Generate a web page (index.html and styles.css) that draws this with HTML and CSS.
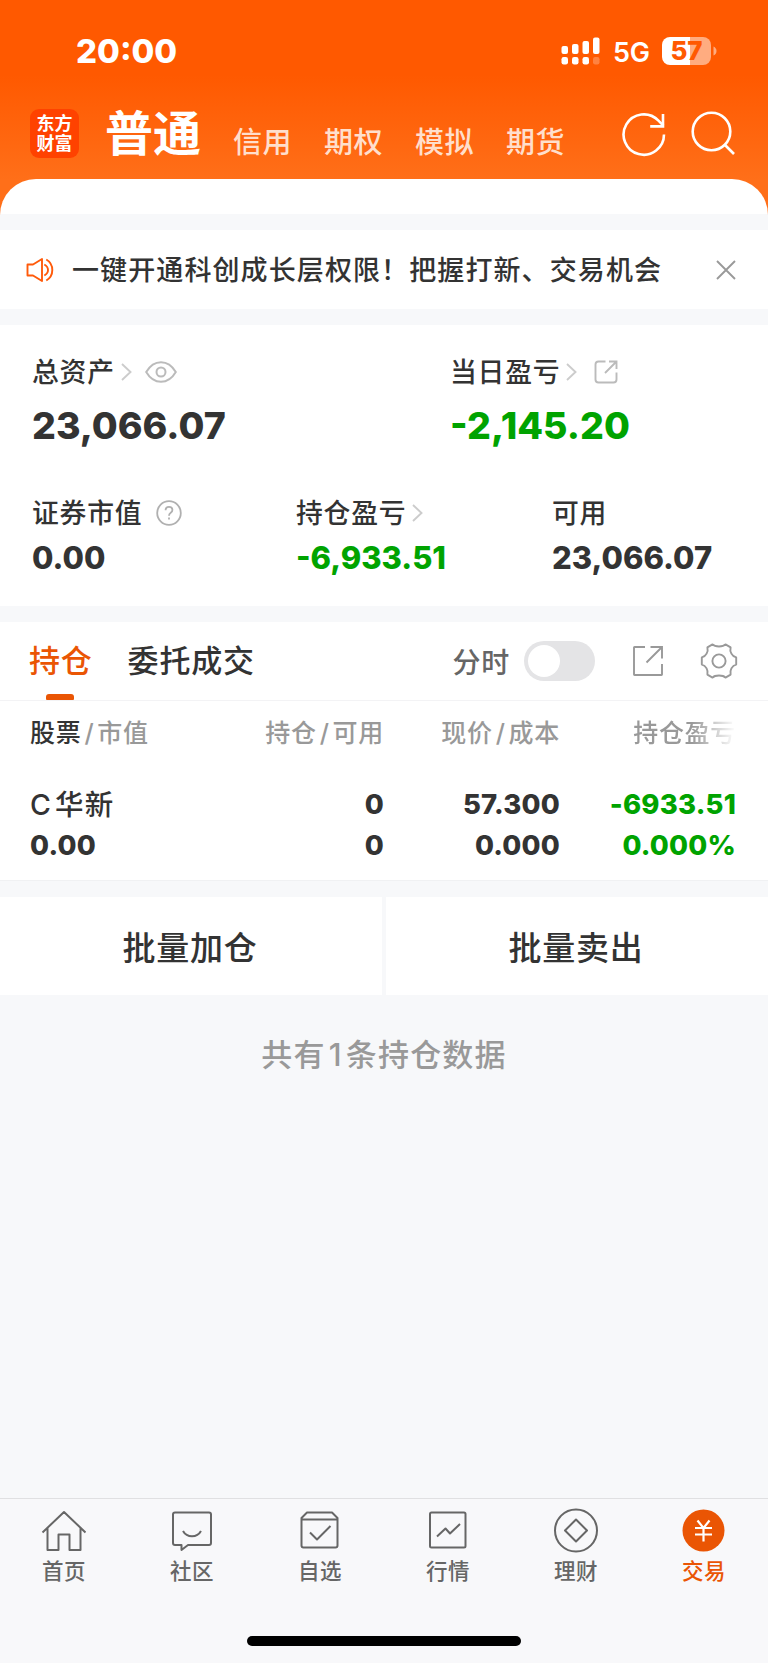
FILE: index.html
```html
<!DOCTYPE html>
<html lang="zh-CN">
<head>
    <meta charset="UTF-8">
    <meta name="viewport" content="width=device-width, initial-scale=1.0">
    <title>交易</title>
    <link rel="stylesheet" href="styles.css">
</head>
<body>
    <div class="app">
        <header class="header">
            <!-- Status bar -->
            <div class="status-bar">
                <span class="time">20:00</span>
                <svg class="signal" width="40" height="28" viewBox="0 0 40 28" fill="#fff">
                    <rect x="0.5" y="9" width="6.5" height="8" rx="2"/>
                    <rect x="11" y="7" width="6.5" height="10" rx="2"/>
                    <rect x="21.5" y="4" width="6.5" height="13" rx="2"/>
                    <rect x="32" y="0.5" width="6.5" height="16.5" rx="2"/>
                    <rect x="0.5" y="20" width="6.5" height="7.5" rx="2.2"/>
                    <rect x="11" y="20" width="6.5" height="7.5" rx="2.2"/>
                    <rect x="21.5" y="20" width="6.5" height="7.5" rx="2.2"/>
                    <rect x="32" y="20" width="6.5" height="7.5" rx="2.2" opacity="0.25"/>
                </svg>
                <span class="network">5G</span>
                <div class="battery"><span>57</span></div>
                <svg class="battery-tip" width="4" height="10" viewBox="0 0 4 10"><path d="M0.5 0.5Q3.5 2 3.5 5T0.5 9.5Z" fill="#ffac80"/></svg>
            </div>

            <!-- Account type tabs -->
            <nav class="account-nav">
                <div class="logo"><span>东方</span><span>财富</span></div>
                <a class="account active">普通</a>
                <a class="account">信用</a>
                <a class="account">期权</a>
                <a class="account">模拟</a>
                <a class="account">期货</a>
                <svg class="refresh" width="44" height="46" viewBox="0 0 44 46" fill="none" stroke="#fff" stroke-width="2.6">
                    <path d="M42 23.5A20.2 20.2 0 1 1 36.2 9.4L41.4 14.6"/>
                    <path d="M41 3V15.4H28.2"/>
                </svg>
                <svg class="search" width="44" height="46" viewBox="0 0 44 46" fill="none" stroke="#fff" stroke-width="2.6">
                    <circle cx="20.5" cy="20.5" r="18.8"/>
                    <path d="M33.5 33.5L43 43"/>
                </svg>
            </nav>
            <div class="sheet-top"></div>
        </header>

        <!-- Notice -->
        <div class="notice">
            <svg width="28" height="26" viewBox="0 0 28 26" fill="none" stroke="#ff5a0a" stroke-width="1.9" stroke-linejoin="round">
                <path d="M1.5 7.5H7L16 2V24L7 18.5H1.5Z"/>
                <path d="M18.3 7.5Q22 9.5 22 13T18.3 18.5M20.3 2.5Q26.3 6 26.3 13T20.3 23.5"/>
            </svg>
            <p>一键开通科创成长层权限！把握打新、交易机会</p>
            <svg class="close" width="20" height="20" viewBox="0 0 20 20" stroke="#999" stroke-width="1.9"><path d="M1 1L19 19M19 1L1 19"/></svg>
        </div>

        <!-- Assets -->
        <section class="assets">
            <div class="assets-main">
                <div class="asset">
                    <div class="label">总资产
                        <svg class="chevron" width="11" height="18" viewBox="0 0 11 18"><path d="M1 1L9.5 9L1 17"/></svg>
                        <svg class="eye" width="32" height="22" viewBox="0 0 32 22" fill="none" stroke="#bbb" stroke-width="2">
                            <path d="M1.2 11Q7 1.2 16 1.2T30.8 11Q25 20.8 16 20.8T1.2 11Z"/>
                            <circle cx="16" cy="11" r="4.5"/>
                        </svg>
                    </div>
                    <div class="value">23,066.07</div>
                </div>
                <div class="asset">
                    <div class="label">当日盈亏
                        <svg class="chevron" width="11" height="18" viewBox="0 0 11 18"><path d="M1 1L9.5 9L1 17"/></svg>
                        <svg class="share" width="24" height="24" viewBox="0 0 24 24" fill="none" stroke="#bbb" stroke-width="1.9">
                            <path d="M11.5 1.5H4.5Q1.5 1.5 1.5 4.5V19.5Q1.5 22.5 4.5 22.5H19.5Q22.5 22.5 22.5 19.5V12.5M15 1.5H22.5V9M22.5 1.5L11 13"/>
                        </svg>
                    </div>
                    <div class="value down">-2,145.20</div>
                </div>
            </div>
            <div class="assets-sub">
                <div class="asset">
                    <div class="label">证券市值
                        <svg class="help" width="26" height="26" viewBox="0 0 26 26" fill="none" stroke="#b0b0b0" stroke-width="1.8">
                            <circle cx="13" cy="13" r="11.8"/>
                            <path d="M9.6 10.2Q9.6 6.8 13 6.8T16.4 10Q16.4 11.6 14.7 12.8Q13 14 13 15.8M13 17.6V19.6"/>
                        </svg>
                    </div>
                    <div class="value">0.00</div>
                </div>
                <div class="asset">
                    <div class="label">持仓盈亏
                        <svg class="chevron" width="11" height="18" viewBox="0 0 11 18"><path d="M1 1L9.5 9L1 17"/></svg>
                    </div>
                    <div class="value down">-6,933.51</div>
                </div>
                <div class="asset">
                    <div class="label">可用</div>
                    <div class="value">23,066.07</div>
                </div>
            </div>
        </section>

        <!-- Positions -->
        <section class="positions">
            <div class="tabs">
                <a class="tab active">持仓</a>
                <a class="tab">委托成交</a>
                <span class="toggle-label">分时</span>
                <span class="toggle"></span>
                <svg class="export" width="32" height="32" viewBox="0 0 32 32" fill="none" stroke="#999" stroke-width="1.9">
                    <path d="M13 2H2.5Q2 2 2 2.5V29.5Q2 30 2.5 30H29.5Q30 30 30 29.5V19M18.5 2H30V13.5M30 2L14.5 17.5"/>
                </svg>
                <svg class="gear" width="38" height="38" viewBox="0 0 38 38" fill="none" stroke="#999" stroke-width="1.9" stroke-linejoin="round">
                    <path d="M12.5 2.4C15 5.2 23 5.2 25.5 2.4L30.6 5.4C29.5 9.5 32 14.5 36.2 15.4V22.6C32 23.5 29.5 28.5 30.6 32.6L25.5 35.6C23 32.8 15 32.8 12.5 35.6L7.4 32.6C8.5 28.5 6 23.5 1.8 22.6V15.4C6 14.5 8.5 9.5 7.4 5.4Z"/>
                    <circle cx="19" cy="19" r="6.6"/>
                </svg>
            </div>
            <div class="table">
                <div class="row head">
                    <span><b>股票</b><i>/</i>市值</span>
                    <span>持仓<i>/</i>可用</span>
                    <span>现价<i>/</i>成本</span>
                    <span class="fade">持仓盈亏</span>
                </div>
                <div class="row">
                    <span class="name">C<em>华新</em></span>
                    <span>0</span>
                    <span>57.300</span>
                    <span class="down">-6933.51</span>
                </div>
                <div class="row">
                    <span>0.00</span>
                    <span>0</span>
                    <span>0.000</span>
                    <span class="down">0.000%</span>
                </div>
            </div>
        </section>

        <div class="batch">
            <button>批量加仓</button>
            <button>批量卖出</button>
        </div>

        <p class="summary">共有<span>1</span>条持仓数据</p>

        <!-- Bottom tab bar -->
        <footer class="tab-bar">
            <nav>
                <a>
                    <svg width="46" height="46" viewBox="0 0 46 46">
                        <path d="M1.5 24.5L23 4L44.5 24.5M6.5 20V42H17.5V26.5H28.5V42H39.5V20"/>
                    </svg>
                    首页
                </a>
                <a>
                    <svg width="46" height="46" viewBox="0 0 46 46">
                        <path d="M6 4.5H40Q42 4.5 42 6.5V35Q42 37 40 37H19L12.5 42V37H6Q4 37 4 35V6.5Q4 4.5 6 4.5Z"/>
                        <path d="M14 23Q17 28.3 23 28.3T32 23"/>
                    </svg>
                    社区
                </a>
                <a>
                    <svg width="46" height="46" viewBox="0 0 46 46">
                        <path d="M4.5 11.5V37.5Q4.5 39.5 6.5 39.5H38.5Q40.5 39.5 40.5 37.5V11.5ZM4.5 11.5V10L10 4.5H35L40.5 10V11.5"/>
                        <path d="M13 24.5L20 31.5L33.5 18"/>
                    </svg>
                    自选
                </a>
                <a>
                    <svg width="46" height="46" viewBox="0 0 46 46">
                        <rect x="5" y="4.5" width="35.5" height="35" rx="1.5"/>
                        <path d="M12 28.5L20.5 20.5L25 25.5L35 16"/>
                    </svg>
                    行情
                </a>
                <a>
                    <svg width="46" height="46" viewBox="0 0 46 46">
                        <circle cx="23" cy="22.5" r="21"/>
                        <path d="M23 11.5L34 22.5L23 33.5L12 22.5Z"/>
                    </svg>
                    理财
                </a>
                <a class="active">
                    <svg width="46" height="46" viewBox="0 0 46 46">
                        <circle cx="22.5" cy="22.5" r="21" fill="#ea5504" stroke="none"/>
                        <path d="M16.5 12.5L22.5 20L28.5 12.5M22.5 20V33.5M14 20H31M14 26.5H31" stroke="#fff" stroke-width="2.2"/>
                    </svg>
                    交易
                </a>
            </nav>
            <div class="home-indicator"></div>
        </footer>
    </div>
</body>
</html>
```
FILE: styles.css
```css
* {
    margin: 0;
    padding: 0;
    box-sizing: border-box;
}

body {
    font-family: Inter, "Noto Sans CJK SC", sans-serif;
    font-weight: 500;
    color: #333;
    background: #f7f8fa;
}

svg {
    display: block;
    flex: none;
}

.app {
    width: 768px;
    height: 1663px;
    display: flex;
    flex-direction: column;
    overflow: hidden;
}

/* Header */
.header {
    height: 230px;
    background: linear-gradient(#ff5900 0, #ff5900 75px, #ff6f19 180px, #ff6f19 222px, #f7f8fa 222px);
    color: #fff;
}

.status-bar {
    height: 84px;
    padding: 18px 51px 0 76px;
    display: flex;
    align-items: center;
}

.time {
    flex: 1;
    font-size: 33px;
    font-weight: 800;
}

.network {
    margin-left: 12px;
    width: 49px;
    padding-top: 2px;
    font-size: 27px;
    font-weight: 600;
    letter-spacing: -0.3px;
}

.battery {
    width: 49px;
    height: 28px;
    border-radius: 8px;
    background: linear-gradient(90deg, #fff 57%, #ffac80 57%);
    color: #ff5900;
    font-size: 26px;
    font-weight: 800;
    line-height: 28px;
    text-align: center;
}

.battery-tip {
    margin-left: 2px;
}

.account-nav {
    height: 95px;
    padding: 1px 33px 0 30px;
    display: flex;
    align-items: center;
}

.logo {
    width: 49px;
    height: 49px;
    margin: 3px 26px 0 0;
    border-radius: 9px;
    background: #ff4200;
    display: flex;
    flex-direction: column;
    justify-content: center;
    font-size: 18px;
    font-weight: 700;
    line-height: 20px;
    text-align: center;
}

.account {
    margin-right: 32px;
    padding-top: 21px;
    color: #ffdfcc;
    font-size: 29px;
    letter-spacing: 0.5px;
    line-height: 40px;
}

.account.active {
    margin-right: 32px;
    padding-top: 3px;
    color: #fff;
    font-size: 48px;
    font-weight: 700;
    letter-spacing: 0;
    line-height: 60px;
}

.refresh {
    margin: 3px 25px 0 auto;
}

.search {
    margin-top: 3px;
}

.sheet-top {
    height: 51px;
    border-radius: 36px 36px 0 0;
    background: linear-gradient(#fff 35px, #f7f8fa 35px);
}

/* Notice */
.notice {
    height: 79px;
    padding: 0 32px 0 26px;
    display: flex;
    align-items: center;
    background: #fff;
    font-size: 27px;
    letter-spacing: 1.1px;
}

.notice p {
    margin-left: 18px;
    padding-bottom: 2px;
}

.notice .close {
    margin-left: auto;
}

/* Assets */
.assets {
    height: 281px;
    margin-top: 16px;
    padding: 26px 0 0 32px;
    background: #fff;
}

.assets-main {
    display: grid;
    grid-template-columns: 418px 1fr;
}

.assets-sub {
    display: grid;
    grid-template-columns: 264px 256px 1fr;
    margin-top: 45px;
}

.label {
    height: 40px;
    padding-bottom: 2px;
    display: flex;
    align-items: center;
    font-size: 26.8px;
    letter-spacing: 0.8px;
}

.label svg {
    margin-top: 3px;
}

.chevron {
    margin-left: 6px;
    fill: none;
    stroke: #ccc;
    stroke-width: 1.9;
}

.eye {
    margin-left: 13px;
}

.share {
    margin-left: 17px;
}

.help {
    margin-left: 14px;
}

.value {
    font-size: 31px;
    font-weight: 800;
    line-height: 40px;
    padding-top: 6px;
}

.assets-main .value {
    height: 56px;
    padding-top: 13px;
    font-size: 37.5px;
    line-height: 44px;
}

.down {
    color: #00a300;
}

/* Positions */
.positions {
    height: 259px;
    margin-top: 16px;
    background: #fff;
    border-bottom: 1px solid #f0f1f3;
}

.tabs {
    height: 79px;
    padding: 0 30px 0 29px;
    display: flex;
    align-items: center;
    border-bottom: 1px solid #f3f3f5;
    font-size: 31px;
    letter-spacing: 0.8px;
}

.tab {
    position: relative;
    margin-right: 35px;
    line-height: 78px;
}

.tab.active {
    color: #ea5504;
}

.tab.active::after {
    content: "";
    position: absolute;
    left: 17px;
    bottom: 0;
    width: 28px;
    height: 6px;
    border-radius: 3px 3px 1px 1px;
    background: #ea5504;
}

.toggle-label {
    margin-left: auto;
    color: #666;
    font-size: 28px;
}

.toggle {
    width: 71px;
    height: 40px;
    margin: 0 37px 0 14px;
    padding: 4px;
    border-radius: 20px;
    background: #e4e4e6;
}

.toggle::before {
    content: "";
    display: block;
    width: 32px;
    height: 32px;
    border-radius: 50%;
    background: #fff;
}

.gear {
    margin-left: 36px;
}

.row {
    height: 42px;
    padding: 0 33px 0 30px;
    display: grid;
    grid-template-columns: 177px 177px 176px 176px;
    align-items: center;
    font-size: 27.5px;
    font-weight: 800;
    letter-spacing: 0.2px;
    text-align: right;
    white-space: nowrap;
}

.row span:first-child {
    text-align: left;
}

.row .name {
    padding-bottom: 3px;
    font-size: 28.5px;
    font-weight: 500;
}

.row em {
    margin-left: 4px;
    font-style: normal;
    letter-spacing: 1.2px;
}

.row.head {
    height: 60px;
    margin-bottom: 21px;
    color: #999;
    font-size: 25px;
    font-weight: 500;
    letter-spacing: 0.7px;
}

.row b {
    color: #333;
    font-weight: 500;
}

.row i {
    margin: 0 3px;
    font-style: normal;
}

.fade {
    -webkit-mask-image: linear-gradient(90deg, #000 75%, transparent);
    mask-image: linear-gradient(90deg, #000 75%, transparent);
}

/* Batch actions */
.batch {
    height: 98px;
    margin-top: 16px;
    display: grid;
    grid-template-columns: 1fr 1fr;
    gap: 4px;
}

.batch button {
    padding-right: 2px;
    border: none;
    background: #fff;
    color: #333;
    font: inherit;
    font-size: 33px;
    letter-spacing: 0.8px;
}

.summary {
    margin-top: 38px;
    color: #999;
    font-size: 31px;
    letter-spacing: 1.2px;
    line-height: 44px;
    text-align: center;
}

.summary span {
    margin: 0 3px;
}

/* Bottom tab bar */
.tab-bar {
    height: 165px;
    margin-top: auto;
    border-top: 1px solid #e0e0e2;
    background: #f8f8fa;
}

.tab-bar nav {
    height: 137px;
    padding-top: 9px;
    display: grid;
    grid-template-columns: repeat(6, 1fr);
}

.tab-bar a {
    display: flex;
    flex-direction: column;
    align-items: center;
    color: #666;
    font-size: 21.5px;
    letter-spacing: 0.6px;
    line-height: 34px;
}

.tab-bar a.active {
    color: #ea5504;
}

.tab-bar svg {
    fill: none;
    stroke: #666;
    stroke-width: 2;
    stroke-linejoin: round;
}

.home-indicator {
    width: 274px;
    height: 10px;
    margin: 0 auto;
    border-radius: 5px;
    background: #000;
}
```
